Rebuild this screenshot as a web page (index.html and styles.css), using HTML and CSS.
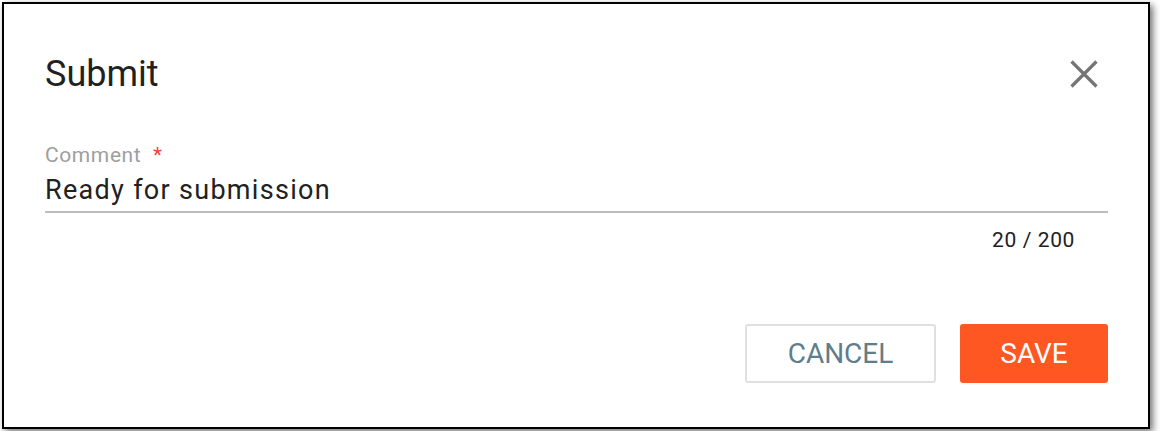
FILE: index.html
```html
<!DOCTYPE html>
<html>
<head>
<meta charset="utf-8">
<link rel="stylesheet" href="styles.css">
</head>
<body>
<div class="dialog">
  <div class="header">
    <h1 class="title">Submit</h1>
    <button class="close" aria-label="Close">
      <svg width="28" height="28" viewBox="0 0 28 28"><path d="M1.5 1.5 L26.5 26.5 M26.5 1.5 L1.5 26.5" stroke="#757575" stroke-width="3.2" fill="none"/></svg>
    </button>
  </div>
  <div class="field">
    <div class="label">Comment <span class="req">*</span></div>
    <div class="input">Ready for submission</div>
    <div class="counter">20 / 200</div>
  </div>
  <div class="actions">
    <button class="btn btn-cancel">CANCEL</button>
    <button class="btn btn-save">SAVE</button>
  </div>
</div>
</body>
</html>
```
FILE: styles.css
```css
html, body {
  margin: 0;
  padding: 0;
  background: #ffffff;
}
body {
  font-family: Roboto, "Liberation Sans", sans-serif;
  padding: 2px;
}
.dialog {
  box-sizing: border-box;
  width: 1148px;
  border: 2px solid #000;
  background: #fff;
  box-shadow: 3px 3px 7px rgba(0,0,0,0.55);
  padding: 50px 40px 44px 41px;
}
.header {
  display: flex;
  align-items: center;
  justify-content: space-between;
  height: 40px;
}
.title {
  margin: 0;
  font-size: 36px;
  line-height: 40px;
  font-weight: 400;
  color: #212121;
}
.close {
  border: 0;
  background: transparent;
  padding: 0;
  margin-right: 10px;
  width: 28px;
  height: 28px;
  display: flex;
}
.field {
  margin-top: 49px;
  display: flex;
  flex-direction: column;
}
.label {
  font-size: 21px;
  line-height: 24px;
  color: #9e9e9e;
  letter-spacing: 0.6px;
}
.req {
  color: #f44336;
  margin-left: 6px;
}
.input {
  margin-top: 7px;
  font-size: 27px;
  line-height: 32px;
  color: #212121;
  letter-spacing: 1.3px;
  padding-bottom: 5px;
  border-bottom: 2px solid #bdbdbd;
}
.counter {
  align-self: flex-end;
  margin-top: 15px;
  margin-right: 33px;
  font-size: 21px;
  line-height: 24px;
  color: #212121;
  letter-spacing: 0.6px;
}
.actions {
  display: flex;
  justify-content: flex-end;
  gap: 24px;
  margin-top: 72px;
}
.btn {
  font-family: Roboto, "Liberation Sans", sans-serif;
  font-size: 28px;
  font-weight: 400;
  height: 59px;
  border-radius: 3px;
  box-sizing: border-box;
}
.btn-cancel {
  width: 191px;
  background: #fff;
  border: 2px solid #e0e0e0;
  color: #607d8b;
}
.btn-save {
  width: 148px;
  background: #ff5722;
  border: 0;
  color: #fff;
}
```
